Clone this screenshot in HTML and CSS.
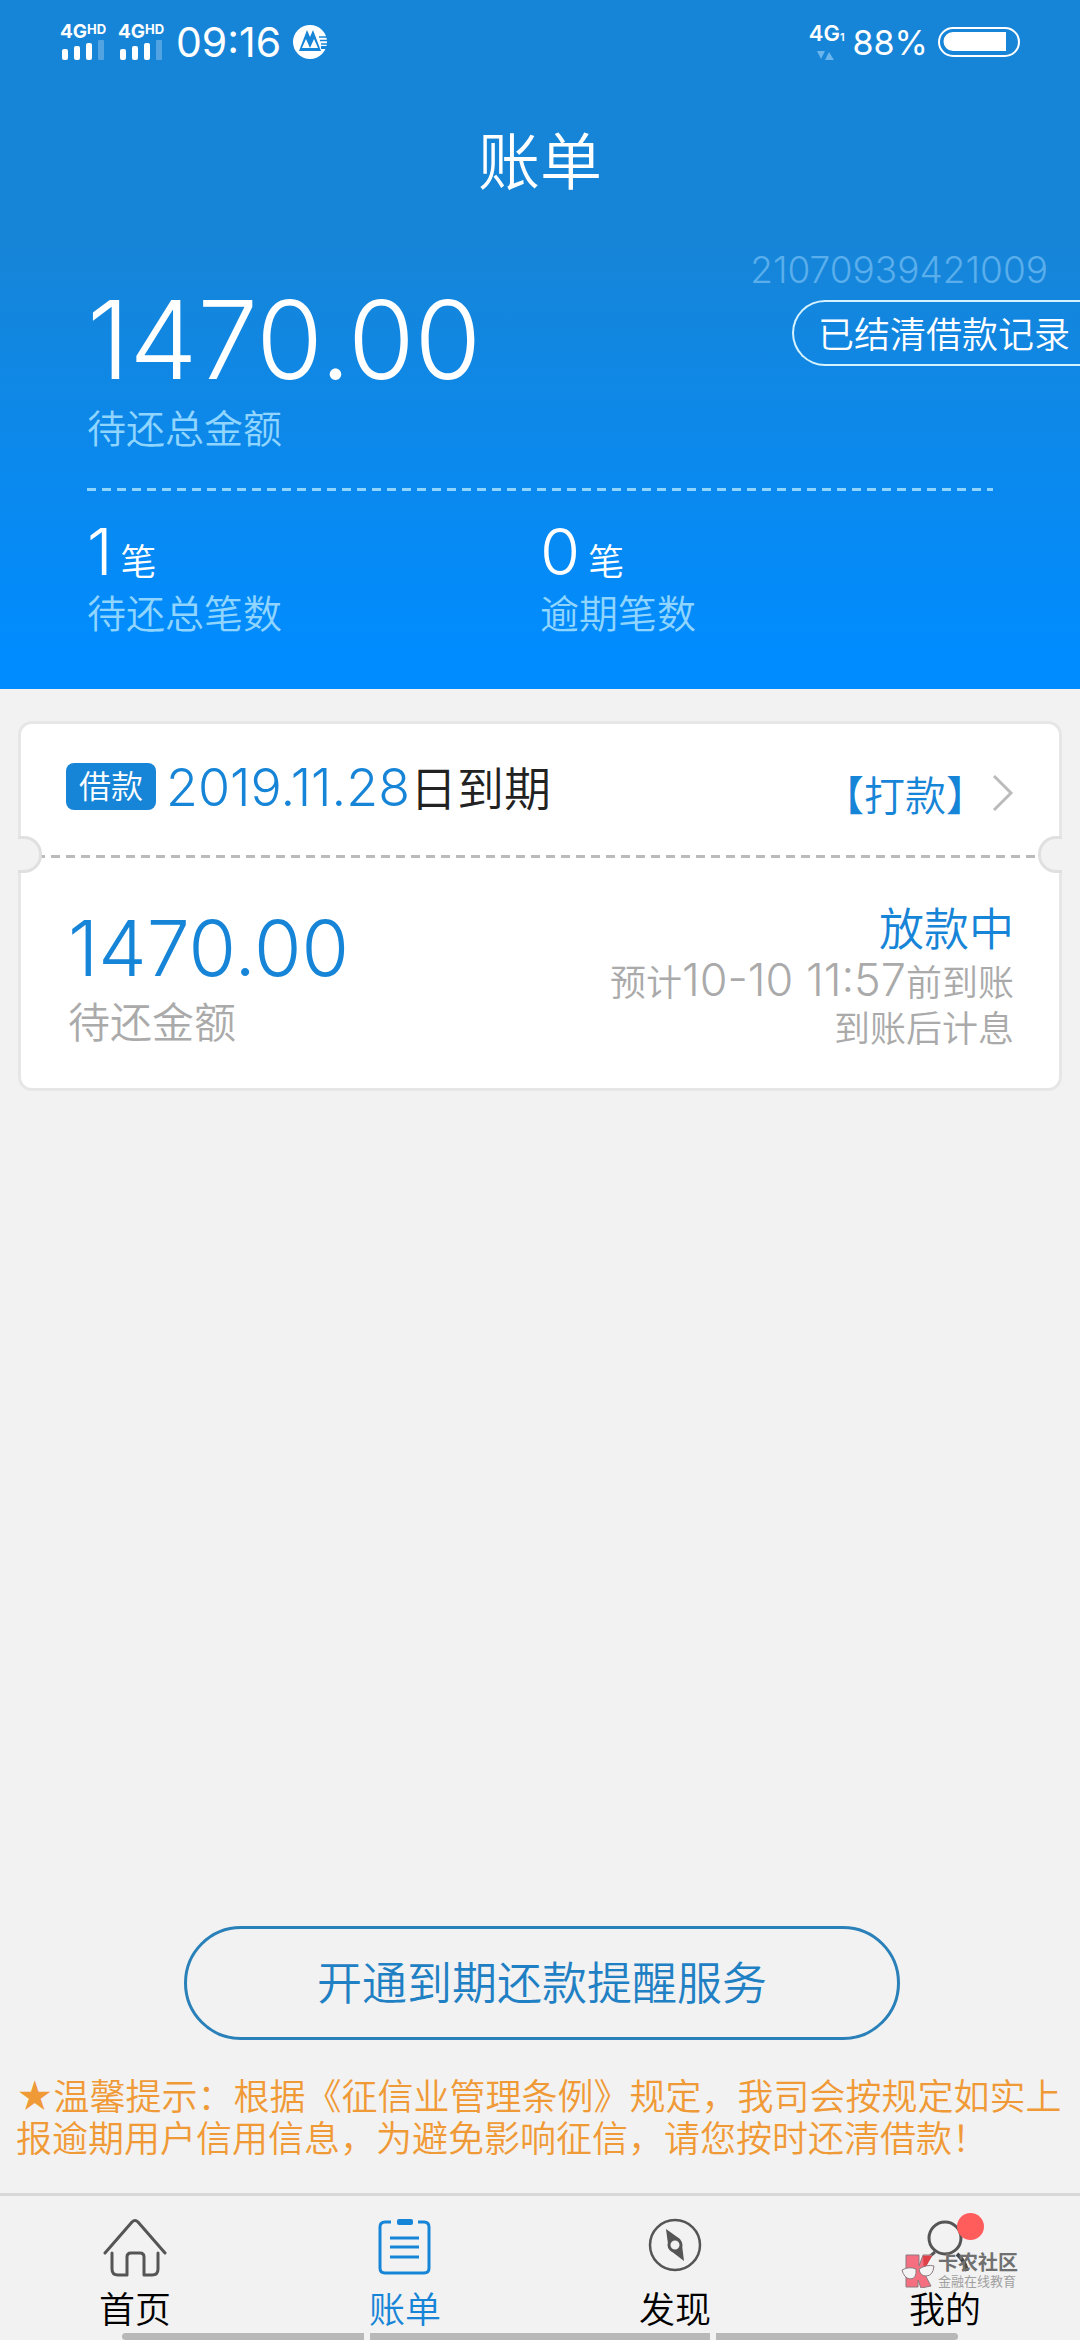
FILE: index.html
```
<!DOCTYPE html>
<html lang="zh-CN">
<head>
  <meta charset="UTF-8" />
  <meta name="viewport" content="width=device-width, initial-scale=1" />
  <title>账单</title>
  <link rel="stylesheet" href="styles.css">
</head>
<body>
  <header class="top">
    <div class="status">
      <div class="signal">
        <div class="net">4G<span>HD</span></div>
        <svg width="44" height="20" viewBox="0 0 44 20" fill="#fff">
          <rect x="2" y="9" width="6" height="11" rx="2"/><rect x="14" y="6" width="6" height="14" rx="2"/>
          <rect x="26" y="3" width="6" height="17" rx="2"/><rect x="38" y="0" width="6" height="20" rx="1" opacity=".25"/>
        </svg>
      </div>
      <div class="signal">
        <div class="net">4G<span>HD</span></div>
        <svg width="44" height="20" viewBox="0 0 44 20" fill="#fff">
          <rect x="2" y="9" width="6" height="11" rx="2"/><rect x="14" y="6" width="6" height="14" rx="2"/>
          <rect x="26" y="3" width="6" height="17" rx="2"/><rect x="38" y="0" width="6" height="20" rx="1" opacity=".25"/>
        </svg>
      </div>
      <span class="time">09:16</span>
      <svg class="bank" width="34" height="34" viewBox="0 0 34 34">
        <circle cx="17" cy="17" r="17" fill="#fff"/>
        <path d="M26 12H34M27 15.500H34M28 19H34" stroke="#1785d7" stroke-width="1.400"/>
        <path d="M6 26L14 5L17 12L20 5L28 26Z" fill="#1785d7"/>
        <path d="M9 23L13 14L17 23ZM17 23L21 14L25 23Z" fill="#fff"/>
        <path d="M28 21H34V24H28Z" fill="#1785d7"/>
      </svg>
      <div class="mobile">
        <div class="data">4G<span>1</span></div>
        <svg width="18" height="10" viewBox="0 0 18 10" fill="#6ab5ec"><path d="M0 0H8L4 8ZM8 9L12 1L17 9Z"/></svg>
      </div>
      <span class="percent">88%</span>
      <svg width="82" height="30" viewBox="0 0 82 30">
        <rect x="1" y="1" width="80" height="28" rx="14" fill="none" stroke="#fff" stroke-width="2"/>
        <path d="M68 5V24H15A9.500 9.500 0 0 1 15 5Z" fill="#fff"/>
      </svg>
    </div>

    <h1>账单</h1>

    <div class="summary">
      <div class="total">
        <div class="total-num">1470.00</div>
        <div class="label">待还总金额</div>
      </div>
      <div class="side">
        <div class="serial">21070939421009</div>
        <a class="history" href="#">已结清借款记录</a>
      </div>
    </div>

    <div class="counts">
      <div>
        <div class="count">1<span>笔</span></div>
        <div class="label">待还总笔数</div>
      </div>
      <div>
        <div class="count">0<span>笔</span></div>
        <div class="label">逾期笔数</div>
      </div>
    </div>
  </header>

  <main>
    <section class="card">
      <div class="card-head">
        <span class="tag">借款</span>
        <div class="date">2019.11.28<span>日到期</span></div>
        <a class="pay" href="#">【打款】
          <svg width="22" height="38" viewBox="0 0 22 38" fill="none" stroke="#bbb" stroke-width="3"><path d="M2 2L19 19L2 36"/></svg>
        </a>
      </div>
      <div class="tear"></div>
      <div class="card-body">
        <div>
          <div class="amount">1470.00</div>
          <div class="amount-label">待还金额</div>
        </div>
        <div class="state">
          <div class="state-name">放款中</div>
          <div class="note">预计<span>10-10 11:57</span>前到账</div>
          <div class="note">到账后计息</div>
        </div>
      </div>
    </section>
  </main>

  <div class="bottom">
    <button type="button" class="remind">开通到期还款提醒服务</button>
    <p class="tips">★温馨提示：根据《征信业管理条例》规定，我司会按规定如实上报逾期用户信用信息，为避免影响征信，请您按时还清借款！</p>
  </div>

  <nav class="tabs">
    <a href="#">
      <svg width="64" height="60" viewBox="0 0 64 60" fill="none" stroke="#555" stroke-width="3" stroke-linecap="round" stroke-linejoin="round">
        <path d="M2 35L29 4Q32 1 35 4L62 35"/>
        <path d="M9 35V51Q9 57 15 57H24V39Q24 35 28 35H37Q41 35 41 39V57H49Q55 57 55 51V35"/>
      </svg>
      首页
    </a>
    <a href="#" class="active">
      <svg width="64" height="60" viewBox="0 0 64 60" fill="none" stroke="#1785d7" stroke-width="3">
        <path d="M18 4H12Q7 4 7 9V50Q7 55 12 55H51Q56 55 56 50V9Q56 4 51 4H45"/>
        <rect x="24" y="1" width="16" height="6" rx="2" fill="#1785d7" stroke="none"/>
        <path d="M17 20H46M17 29H46M17 39H46"/>
      </svg>
      账单
    </a>
    <a href="#">
      <svg width="64" height="60" viewBox="0 0 64 60" fill="none" stroke="#555">
        <circle cx="32" cy="27" r="25" stroke-width="2.500"/>
        <path d="M23 11L37 21L39 27L41 43L28 33L25 26Z" fill="#555" stroke="none"/>
        <circle cx="32" cy="27" r="6" fill="#f2f2f2" stroke-width="3"/>
      </svg>
      发现
    </a>
    <a href="#">
      <svg width="64" height="60" viewBox="0 0 64 60" fill="none" stroke="#555" stroke-width="3">
        <circle cx="32" cy="20" r="16"/>
        <path d="M22 34Q12 41 9 54"/>
        <path d="M44 36Q52 43 54 53" stroke="#444" stroke-width="4"/>
      </svg>
      <i class="dot"></i>
      我的
    </a>

    <div class="mark">
      <svg width="34" height="34" viewBox="0 0 34 34" stroke="#8d7a80" stroke-width="1">
        <path d="M5 1H18V12L22 1H31L22 17L30 32L20 34L17 26V33H5Z" fill="#f56f80"/>
        <path d="M22 2H31L23 16Z" fill="#df3f46" stroke="none"/>
        <path d="M1 16Q8 12 15 15Q16 25 9 25Q3 24 1 16ZM18 15Q26 10 33 12Q32 22 25 22Q19 22 18 15Z" fill="#f4f4f4"/>
      </svg>
      <div>
        <div class="mark-name">卡农社区</div>
        <div class="mark-sub">金融在线教育</div>
      </div>
    </div>
    <div class="gesture"><i></i><i></i><i></i></div>
  </nav>
</body>
</html>
```
FILE: styles.css
```
* {
  margin: 0;
  padding: 0;
  box-sizing: border-box;
}
body {
  min-height: 100vh;
  background: #f2f2f2;
  font-family: Inter, "Noto Sans CJK SC", sans-serif;
  font-weight: 350;
  display: flex;
  flex-direction: column;
  overflow-x: hidden;
}
a {
  color: inherit;
  text-decoration: none;
}
svg {
  display: block;
  flex: none;
}

/* header */
.top {
  background: linear-gradient(#1785d7 34%, #008cff 96%);
  color: #fff;
  padding-bottom: 50px;
}
.status {
  height: 84px;
  padding: 0 60px;
  display: flex;
  align-items: center;
  font-weight: 400;
}
.signal {
  width: 58px;
}
.net {
  font-size: 19px;
  font-weight: 700;
  line-height: 16px;
  display: flex;
}
.net span {
  font-size: 13px;
  line-height: 10px;
}
.time {
  font-size: 41px;
}
.bank {
  margin-left: 12px;
}
.mobile {
  margin-left: auto;
}
.mobile svg {
  margin: 4px 0 0 8px;
}
.data {
  font-size: 22px;
  font-weight: 600;
  line-height: 20px;
}
.data span {
  font-size: 11px;
}
.percent {
  font-size: 34px;
  margin: 0 10px 0 8px;
}
h1 {
  margin-top: 47px;
  font-size: 62px;
  font-weight: inherit;
  line-height: 64px;
  text-align: center;
}
.summary {
  display: flex;
  justify-content: space-between;
  margin-top: 57px;
  padding-left: 87px;
}
.total {
  padding-top: 38px;
}
.total-num {
  font-size: 108px;
  line-height: 100px;
  margin-bottom: 14px;
}
.label {
  font-size: 39px;
  line-height: 50px;
  color: #8fd5ff;
}
.serial {
  font-size: 37px;
  font-weight: 300;
  line-height: 36px;
  color: #5aaeeb;
  text-align: right;
  padding-right: 32px;
}
.side {
  display: flex;
  flex-direction: column;
  align-items: flex-end;
  gap: 12px;
}
.history {
  height: 66px;
  line-height: 66px;
  font-size: 36px;
  padding: 0 10px 0 24px;
  border: 2px solid #d5f2ff;
  border-right: none;
  border-radius: 33px 0 0 33px;
}
.counts {
  display: grid;
  grid-template-columns: 1fr 1fr;
  margin: 34px 87px 0;
  padding-top: 32px;
  background: repeating-linear-gradient(90deg, #8fd5ff 0 9px, transparent 9px 15px) top / 100% 3px no-repeat;
}
.count {
  display: flex;
  align-items: baseline;
  height: 69px;
  font-size: 65px;
  line-height: 64px;
}
.count span {
  font-size: 36px;
  margin-left: 8px;
}

/* bill card */
main {
  flex: 1;
  padding: 32px 18px;
}
.card {
  background: #fff;
  border: 3px solid #e6e6e6;
  border-radius: 14px;
}
.card-head {
  display: flex;
  align-items: center;
  height: 131px;
  padding: 0 45px 6px;
}
.tag {
  background: #1785d7;
  color: #fff;
  font-size: 32px;
  line-height: 47px;
  padding: 0 13px;
  border-radius: 8px;
  margin-right: 10px;
}
.date {
  padding-top: 4px;
  font-size: 52px;
  line-height: 60px;
  color: #1785d7;
}
.date span {
  font-size: 47px;
  color: #222;
}
.pay {
  margin-left: auto;
  padding-top: 12px;
  display: flex;
  align-items: center;
  gap: 5px;
  font-size: 41px;
  color: #1785d7;
}
.tear {
  position: relative;
  height: 3px;
  background: repeating-linear-gradient(90deg, #bbb 0 9px, transparent 9px 15px);
}
.tear::before,
.tear::after {
  content: "";
  box-sizing: border-box;
  position: absolute;
  top: -19px;
  width: 24px;
  height: 37px;
  background: #f2f2f2;
  border: 3px solid #e0e0e0;
}
.tear::before {
  left: -3px;
  border-left: none;
  border-radius: 0 18px 18px 0;
}
.tear::after {
  right: -3px;
  border-right: none;
  border-radius: 18px 0 0 18px;
}
.card-body {
  display: flex;
  justify-content: space-between;
  padding: 45px 45px 35px 47px;
}
.amount {
  font-size: 77px;
  line-height: 90px;
  color: #1785d7;
}
.amount-label {
  font-size: 42px;
  line-height: 60px;
  color: #aaa;
}
.state {
  text-align: right;
}
.state-name {
  font-size: 45px;
  line-height: 54px;
  color: #1785d7;
}
.note {
  font-size: 36px;
  line-height: 46px;
  color: #aaa;
}
.note span {
  font-size: 45px;
}

/* reminder */
.bottom {
  padding: 0 12px 0 16px;
}
.remind {
  display: block;
  width: 68%;
  height: 114px;
  margin: 0 auto 36px;
  padding-bottom: 6px;
  background: none;
  border: 3px solid #2a80b9;
  border-radius: 57px;
  font: inherit;
  font-size: 45px;
  color: #1f80c4;
}
.tips {
  font-size: 36px;
  line-height: 42px;
  color: #f09a37;
  padding-bottom: 33px;
}

/* tab bar */
.tabs {
  position: relative;
  display: grid;
  grid-template-columns: repeat(4, 1fr);
  height: 147px;
  padding-top: 22px;
  border-top: 3px solid #d8d8d8;
}
.tabs a {
  position: relative;
  display: flex;
  flex-direction: column;
  align-items: center;
  gap: 9px;
  font-size: 36px;
  line-height: 46px;
  color: #000;
}
.tabs .active {
  color: #1785d7;
}
.dot {
  position: absolute;
  top: -5px;
  left: 50%;
  margin-left: 12px;
  width: 27px;
  height: 27px;
  border-radius: 50%;
  background: #ff5c5c;
}
.mark {
  position: absolute;
  right: 62px;
  top: 57px;
  display: flex;
  align-items: center;
  gap: 3px;
}
.mark-name {
  font-size: 20px;
  font-weight: 700;
  line-height: 20px;
  color: #707070;
}
.mark-sub {
  font-size: 13px;
  font-weight: 400;
  line-height: 16px;
  color: #a0a0a0;
}
.gesture {
  position: absolute;
  left: 122px;
  right: 122px;
  bottom: 0;
  display: grid;
  grid-template-columns: 5fr 7fr 5fr;
  gap: 6px;
}
.gesture i {
  height: 7px;
  background: #b8b8b8;
}
.gesture i:first-child {
  border-radius: 4px 0 0 4px;
}
.gesture i:last-child {
  border-radius: 0 4px 4px 0;
}
```
